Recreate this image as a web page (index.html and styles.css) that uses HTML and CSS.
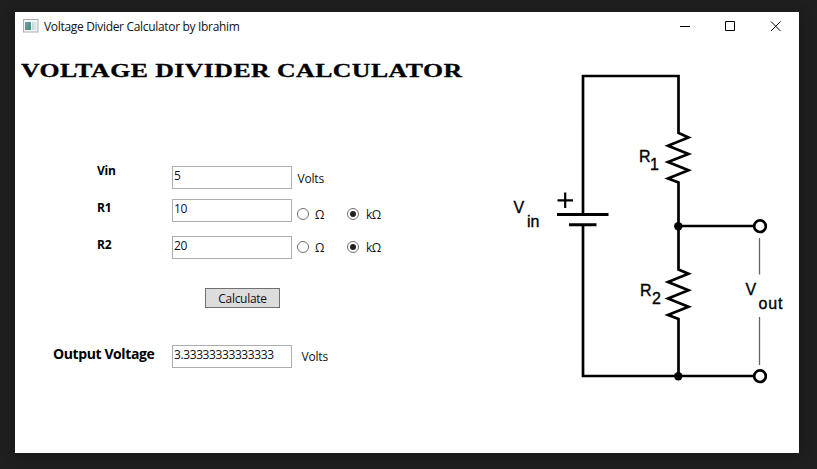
FILE: index.html
```html
<!DOCTYPE html>
<html lang="en">
<head>
<meta charset="utf-8">
<title>Voltage Divider Calculator by Ibrahim</title>
<link rel="stylesheet" href="styles.css">
</head>
<body>
<main class="window">
  <header class="titlebar">
    <svg class="app-icon" width="16" height="14" viewBox="0 0 16 14">
      <defs><linearGradient id="pane" x1="0" y1="0" x2="1" y2="1"><stop offset="0" stop-color="#69a1b4"/><stop offset="1" stop-color="#468c70"/></linearGradient></defs>
      <rect x=".5" y=".5" width="14.5" height="12.5" fill="#f3f4f5" stroke="#a9afb3"/>
      <rect x="2" y="3" width="6" height="8" fill="url(#pane)"/>
      <rect x="9" y="3" width="2.5" height="8" fill="#cbdbdc"/>
      <rect x="12" y="3" width="1.5" height="8" fill="#dce3e5"/>
    </svg>
    <span class="caption">Voltage Divider Calculator by Ibrahim</span>
    <svg class="controls" width="102" height="12" viewBox="0 0 102 12" fill="none" stroke="#000">
      <path d="M0 5.5H10M45.5 .5H54.5V9.5H45.5ZM91 .5L100.5 10M100.5 .5L91 10"/>
    </svg>
  </header>
  <div class="content">
    <section class="form">
      <h1 class="heading">VOLTAGE DIVIDER CALCULATOR</h1>
      <div class="row row-vin">
        <label class="label">Vin</label>
        <div class="field">5</div>
        <span class="unit">Volts</span>
      </div>
      <div class="row row-r1">
        <label class="label">R1</label>
        <div class="field">10</div>
        <div class="options options-r1">
          <span class="radio"></span><span class="option">Ω</span>
          <span class="radio checked"></span><span class="option kilo">kΩ</span>
        </div>
      </div>
      <div class="row row-r2">
        <label class="label">R2</label>
        <div class="field">20</div>
        <div class="options">
          <span class="radio"></span><span class="option">Ω</span>
          <span class="radio checked"></span><span class="option kilo">kΩ</span>
        </div>
      </div>
      <button class="calculate"><span>Calculate</span></button>
      <div class="row row-output">
        <label class="label output-label">Output Voltage</label>
        <div class="field result">3.33333333333333</div>
        <span class="unit output-unit">Volts</span>
      </div>
    </section>
    <svg class="circuit" width="299" height="340" viewBox="500 60 299 340">
      <g fill="none" stroke="#000" stroke-width="2.7" stroke-linejoin="miter">
        <path d="M583 214.500V76H678.500V133L688.500 137.500L668 145.700L688.500 154L668 162L688.500 170.300L668 178.500L678.500 182.500V269.500L688.500 273.700L668 282L688.500 290.300L668 298.500L688.500 306.700L668 315L678.500 319V376"/>
        <path d="M583 225V376H754M678.500 226H754"/>
        <path d="M557 214.500H608.500M569 224.800H596.500" stroke-width="3"/>
        <path d="M557.500 200.300H573M565.200 192.500V208" stroke-width="2.2"/>
        <circle cx="760" cy="226.200" r="5.800"/>
        <circle cx="760" cy="376.200" r="5.800"/>
      </g>
      <circle cx="678.300" cy="226.200" r="4.200"/>
      <circle cx="678.300" cy="376.200" r="4.200"/>
      <path d="M759.500 238V274.500M759.500 317V365" fill="none" stroke="#666" stroke-width="1.300"/>
      <g class="symbols">
        <text x="513.500" y="213">V</text><text x="527" y="227">in</text>
        <text x="639" y="161.500">R</text><text x="650" y="170">1</text>
        <text x="640" y="295.500">R</text><text x="652" y="304">2</text>
        <text x="745.500" y="295">V</text><text x="758.500" y="308.500" textLength="24">out</text>
      </g>
    </svg>
  </div>
</main>
</body>
</html>
```

FILE: styles.css
```css
* { box-sizing: border-box; }
body {
  margin: 0;
  width: 817px;
  height: 469px;
  padding: 12px 18px 16px 15px;
  background: #1f1f1f;
  font-family: "Open Sans", "Noto Sans", sans-serif;
  font-size: 12px;
  line-height: 16px;
  color: #111;
  overflow: hidden;
}
.window {
  width: 784px;
  height: 441px;
  background: #fff;
  box-shadow: 0 2px 10px #161616;
}
.titlebar {
  display: flex;
  height: 30px;
  padding: 7px 17px 0 8px;
}
.caption {
  margin-left: 5px;
  letter-spacing: -.32px;
  white-space: nowrap;
}
.controls { margin: 2px 0 0 auto; }
.content { display: flex; }
.form { width: 485px; }
.heading {
  margin: 17px 0 0 6px;
  height: 24px;
  font: bold 19px/24px "Liberation Serif", serif;
  letter-spacing: .35px;
  -webkit-text-stroke: .3px #000;
  color: #000;
  white-space: nowrap;
  transform: scaleX(1.355);
  transform-origin: left;
  width: max-content;
}
.row {
  display: grid;
  grid-template-columns: 75px 120px auto;
  height: 23px;
  margin-left: 82px;
  white-space: nowrap;
}
.row-vin { margin-top: 83px; }
.row-r1 { margin-top: 10px; }
.row-r2 { margin-top: 14px; }
.row-output { margin: 37px 0 0 38px; grid-template-columns: 119px 120px auto; }
.label { font-weight: bold; margin-top: -3px; letter-spacing: -.2px; color: #000; }
.row-r1 .label, .row-r2 .label { margin-top: 1px; }
.field {
  height: 23px;
  padding: 1px;
  border: 1px solid #abadb3;
  line-height: 16px;
  letter-spacing: -.3px;
}
.result { letter-spacing: -.4px; }
.unit { margin: 5px 0 0 5.500px; letter-spacing: -.2px; }
.options { display: flex; align-items: center; height: 16px; margin: 3px 0 0 5px; }
.options-r1 { margin-top: 7px; }
.radio {
  display: flex;
  width: 12px;
  height: 12px;
  border: 1px solid #707070;
  border-radius: 50%;
}
.checked::before {
  content: "";
  width: 6px;
  height: 6px;
  margin: 2px;
  border-radius: 50%;
  background: #212121;
}
.option { width: 32px; margin-left: 6px; padding-top: 1px; }
.kilo { margin-left: 7px; letter-spacing: -.5px; }
.calculate {
  display: block;
  width: 75px;
  height: 20px;
  margin: 29px 0 0 190px;
  padding: 1px 0 0;
  border: 1px solid #707070;
  background: #ddd;
  font: inherit;
  letter-spacing: -.3px;
  color: #111;
}
.output-label { margin-top: 1px; font-size: 14px; letter-spacing: -.4px; }
.row-output .output-label { margin-top: 1px; }
.row-output .output-unit { margin: 4px 0 0 9.500px; }
.circuit { margin-top: 18px; flex: none; }
.symbols {
  font: 16px "Liberation Sans", sans-serif;
  fill: #000;
  stroke: #000;
  stroke-width: .35px;
}
```
